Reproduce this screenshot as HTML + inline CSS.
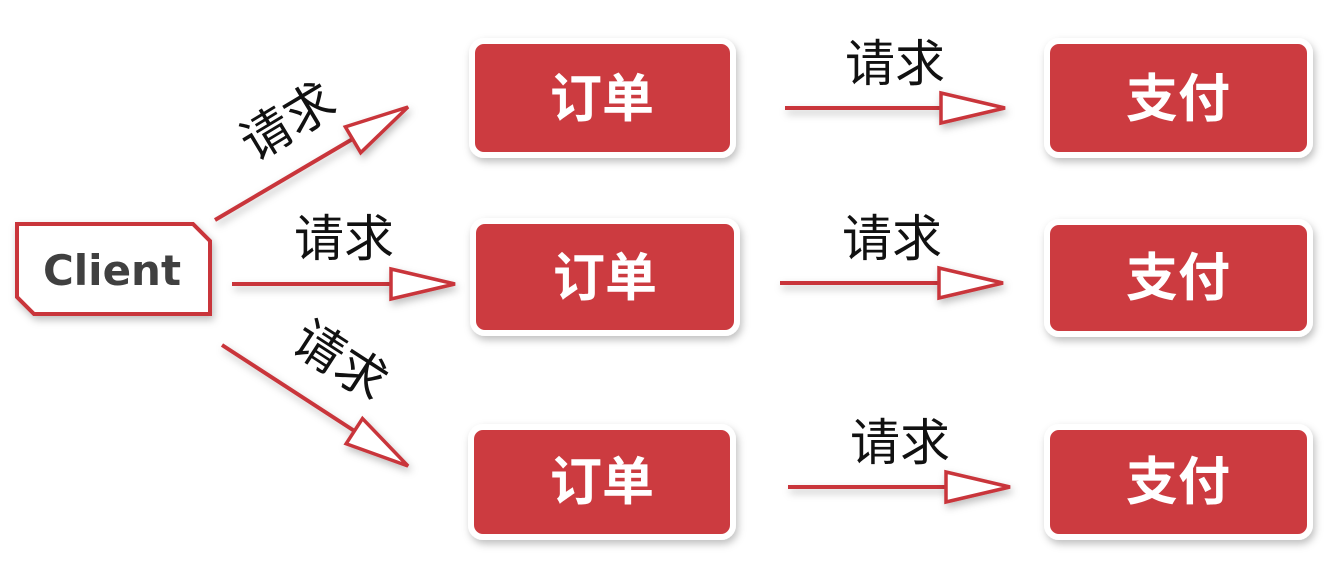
<!DOCTYPE html>
<html><head><meta charset="utf-8"><style>
html,body{margin:0;padding:0;background:#fff;width:1344px;height:576px;overflow:hidden}
svg{display:block}
.t{font-family:"Liberation Sans","Noto Sans CJK SC",sans-serif;font-size:50px;fill:#111}
.b{font-family:"Liberation Sans","Noto Sans CJK SC",sans-serif;font-size:52px;font-weight:bold;fill:#fff}
</style></head><body>
<svg width="1344" height="576" viewBox="0 0 1344 576">
<defs>
<filter id="sh" x="-20%" y="-20%" width="140%" height="150%"><feDropShadow dx="2" dy="4" stdDeviation="4" flood-color="#000" flood-opacity="0.25"/></filter>
<g id="ah"><polygon points="0,0 -64,-15 -64,15" fill="#fff" stroke="#c9353b" stroke-width="3.5" stroke-linejoin="miter"/></g>
</defs>
<polygon points="17,224 193,224 210,241 210,314 34,314 17,297" fill="#fff" stroke="#c9353b" stroke-width="4" filter="url(#sh)"/>
<text x="112" y="285" text-anchor="middle" style="font-family:'DejaVu Sans','Liberation Sans',sans-serif;font-size:42px;font-weight:bold;fill:#404040">Client</text>
<g stroke="#c9353b" stroke-width="4" filter="url(#sh)">
<line x1="215" y1="220" x2="356" y2="137"/>
<line x1="232" y1="284" x2="392" y2="284"/>
<line x1="222" y1="345" x2="356" y2="432"/>
<line x1="785" y1="108" x2="942" y2="108"/>
<line x1="780" y1="283" x2="940" y2="283"/>
<line x1="788" y1="487" x2="947" y2="487"/>
</g>
<g filter="url(#sh)">
<use href="#ah" transform="translate(408,107) rotate(-30.8)"/>
<use href="#ah" transform="translate(455,284)"/>
<use href="#ah" transform="translate(408,466) rotate(33)"/>
<use href="#ah" transform="translate(1005,108)"/>
<use href="#ah" transform="translate(1003,283)"/>
<use href="#ah" transform="translate(1010,487)"/>
</g>
<text class="t" transform="translate(290,125) rotate(-31)" text-anchor="middle" dominant-baseline="middle">请求</text>
<text class="t" x="344" y="256" text-anchor="middle">请求</text>
<text class="t" transform="translate(338,364) rotate(33)" text-anchor="middle" dominant-baseline="middle">请求</text>
<text class="t" x="895" y="81" text-anchor="middle">请求</text>
<text class="t" x="892" y="256" text-anchor="middle">请求</text>
<text class="t" x="900" y="460" text-anchor="middle">请求</text>
<g fill="#cc3b3f" stroke="#fff" stroke-width="6" filter="url(#sh)">
<rect x="472" y="41" width="261" height="114" rx="12"/>
<rect x="473" y="221" width="264" height="112" rx="12"/>
<rect x="471" y="427" width="262" height="110" rx="12"/>
<rect x="1047" y="41" width="263" height="114" rx="12"/>
<rect x="1047" y="222" width="263" height="112" rx="12"/>
<rect x="1047" y="427" width="263" height="110" rx="12"/>
</g>
<text class="b" x="602" y="117" text-anchor="middle">订单</text>
<text class="b" x="605" y="296" text-anchor="middle">订单</text>
<text class="b" x="602" y="500" text-anchor="middle">订单</text>
<text class="b" x="1178" y="117" text-anchor="middle">支付</text>
<text class="b" x="1178" y="296" text-anchor="middle">支付</text>
<text class="b" x="1178" y="500" text-anchor="middle">支付</text>
</svg>
</body></html>
